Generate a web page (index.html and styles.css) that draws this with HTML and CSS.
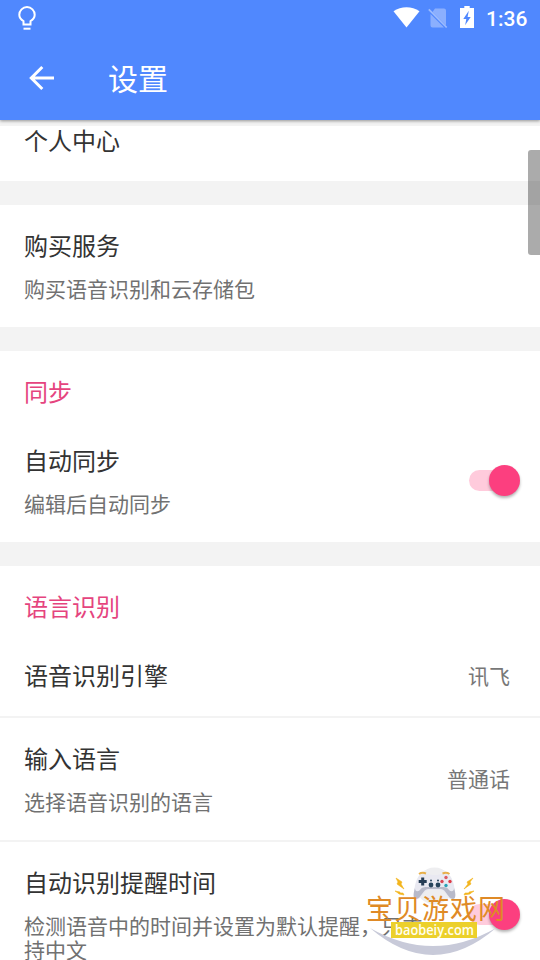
FILE: index.html
```html
<!DOCTYPE html>
<html lang="zh-CN">
<head>
<meta charset="utf-8">
<title>设置</title>
<link rel="stylesheet" href="styles.css">
</head>
<body>
<div class="screen">
  <header class="header">
    <div class="status">
      <svg class="bulb" width="18" height="26" viewBox="0 0 18 26" fill="none" stroke="#fff" stroke-width="2"><path d="M5.500 18.600v-3.400C3 13.700 1.300 11.600 1.300 8.800a7.700 7.700 0 0 1 15.400 0c0 2.800-1.700 4.900-4.200 6.400v3.400z"/><path d="M5.500 22.700h7"/></svg>
      <span class="spacer"></span>
      <svg class="wifi" width="27" height="21" viewBox="0 0 27 21"><path d="M.5 4.200C8-1.200 19-1.200 26.500 4.200L13.500 20.600z" fill="#fff"/></svg>
      <svg class="sim" width="20" height="22" viewBox="0 0 20 22"><path d="M7 1.500h9a2 2 0 0 1 2 2v15L4.500 5zM2.500 7L16 20.500H4.500a2 2 0 0 1-2-2z" fill="#8baffe"/><path d="M.8 2.300L18.700 20.500" stroke="#9dbcfe" stroke-width="1.700"/></svg>
      <svg class="battery" width="14" height="22" viewBox="0 0 14 22"><path d="M4.300 0h5.400v2H14v20H0V2h4.300z" fill="#fff"/><path d="M8.800 4.800L3.300 13h3l-1.200 6.200L10.700 11H7.600z" fill="#5088fe"/></svg>
      <span class="clock">1:36</span>
    </div>
    <div class="toolbar">
      <svg class="back" width="26" height="26" viewBox="0 0 26 26" fill="none" stroke="#fff" stroke-width="3"><path d="M25 13H3M13.300 2L2.300 13l11 11"/></svg>
      <h1>设置</h1>
    </div>
  </header>
  <main>
    <section class="profile"><div class="title">个人中心</div></section>
    <section>
      <div class="row"><div><div class="title">购买服务</div><div class="sub">购买语音识别和云存储包</div></div></div>
    </section>
    <section>
      <h2>同步</h2>
      <div class="row with-switch"><div><div class="title">自动同步</div><div class="sub">编辑后自动同步</div></div><span class="switch"></span></div>
    </section>
    <section>
      <h2>语言识别</h2>
      <div class="row compact"><div class="title">语音识别引擎</div><span class="value">讯飞</span></div>
      <div class="row divided"><div><div class="title">输入语言</div><div class="sub">选择语音识别的语言</div></div><span class="value">普通话</span></div>
      <div class="row divided with-switch last"><div><div class="title">自动识别提醒时间</div><div class="sub">检测语音中的时间并设置为默认提醒，只支<br>持中文</div></div><span class="switch"></span></div>
    </section>
  </main>
  <div class="scrollbar"></div>
  <svg class="watermark" width="150" height="94" viewBox="0 0 150 94">
    <circle cx="73.500" cy="21" r="18.500" fill="#eeeef0"/>
    <path d="M9 63Q72 117 135 63Q72 99 9 63z" fill="#c8cad9"/>
    <path d="M59 10c6-3 10 0 14.500 0S83 7 88 10c4 3 6 13 6 19 0 5-3 7-6 4-4-5-5-8-9-8H68c-4 0-5 4-9 8-4 3-6 0-6-4 0-6 2-16 6-19z" fill="#e9e9f1"/>
    <path d="M54 23c-2 6-2 11 1 11 5 0 7-10 12-10h13c5 0 7 10 12 10 3 0 3-5 1-11 0 4-3 4-5 2-2-3-4-3-8-3H67c-4 0-6 0-8 3-2 2-5 2-5-2z" fill="#b8bac9"/>
    <path d="M58 9q3-2 7-.5M81.500 8.500q4-1.500 7 .5" stroke="#e7b04b" stroke-width="2" fill="none"/>
    <path d="M57.700 16.500h8M61.700 12.500v8" stroke="#263d55" stroke-width="3"/>
    <g fill="#27445c"><circle cx="70" cy="15.500" r="1"/><circle cx="77" cy="15.500" r="1"/><circle cx="70" cy="20" r="2.400"/><circle cx="77" cy="20" r="2.400"/></g>
    <circle cx="85" cy="12.500" r="1.700" fill="#dc5b62"/><circle cx="81" cy="16.500" r="1.700" fill="#d84755"/><circle cx="89" cy="16.500" r="1.700" fill="#de3a45"/><circle cx="85" cy="20.500" r="1.700" fill="#2aa1b6"/>
    <g fill="#f3b51e" stroke="#f3b51e" stroke-width=".6"><path d="M35 13l6 4-1 2 3 5-7-5 1-2zM34 26l5 1v1l3 0 1 2-5-1-1-1zM112 13l-6 4 1 2-4 5 7-5-1-2zM113 26l-5 1v1l-4 0-1 2 6-1 1-1z"/></g>
    <text class="brand" x="5" y="53.500">宝贝游戏网</text>
    <rect x="30" y="57" width="86" height="16" fill="#ecd02b"/>
    <text class="domain" x="34" y="69.500" textLength="79" lengthAdjust="spacingAndGlyphs">baobeiy.com</text>
  </svg>
</div>
</body>
</html>
```
FILE: styles.css
```css
* { box-sizing: border-box; }
body { margin: 0; background: #fff; font-family: Roboto, "Noto Sans CJK SC", sans-serif; }
.screen { position: relative; width: 540px; height: 960px; overflow: hidden; display: flex; flex-direction: column; }
.header { position: relative; flex: none; height: 120px; background: #5088fe; color: #fff; box-shadow: 0 1px 3px rgba(0,0,0,.4); }
.status { height: 36px; display: flex; align-items: center; padding: 0 12px 0 18px; }
.bulb { margin-top: 1px; }
.spacer { flex: 1; }
.wifi { margin-right: 8px; margin-top: -1px; }
.sim { margin-right: 12px; }
.battery { margin-right: 12px; margin-top: -2px; }
.clock { font-size: 21px; line-height: 24px; font-weight: 500; width: 42px; margin-top: 2px; white-space: nowrap; }
.toolbar { height: 84px; display: flex; align-items: center; padding-left: 29px; }
.back { margin-right: 53px; }
h1 { margin: 0 0 3px; font: 400 30px/36px "Noto Sans CJK SC", sans-serif; }
main { flex: 1; min-height: 0; overflow: hidden; font-family: "Noto Sans CJK SC", sans-serif; }
section { border-bottom: 24px solid #f3f3f3; }
.profile { height: 85px; padding: 0 24px; border-top: 6px solid #f3f3f3; }
.row { display: flex; justify-content: space-between; align-items: center; padding: 26px 30px 26px 24px; height: 122px; }
.title { font-size: 24px; line-height: 28px; color: #333; white-space: nowrap; }
.sub { margin-top: 17px; margin-bottom: 1px; font-size: 21px; line-height: 24px; color: #717171; white-space: nowrap; }
h2 { margin: 0; padding: 26px 24px 0; height: 69px; font-size: 24px; line-height: 28px; font-weight: 400; color: #e5447e; }
.compact { height: 81px; padding-bottom: 27px; }
.divided { height: 124px; border-top: 2px solid #f3f3f3; }
.last { height: 148px; }
.value { font-size: 21px; line-height: 24px; color: #777; }
.divided .value { margin-bottom: 2px; }
.with-switch { padding-right: 20px; }
.switch { flex: none; position: relative; width: 45px; height: 21px; border-radius: 11px; background: #ffcbdc; margin: 0 6px 1px 0; }
.switch::after { content: ""; position: absolute; right: -6px; top: -5px; width: 31px; height: 31px; border-radius: 50%; background: #fc3f7f; box-shadow: 0 2px 3px rgba(0,0,0,.3); }
.scrollbar { position: absolute; right: 0; top: 150px; width: 12px; height: 105px; border-radius: 3px 0 0 3px; background: rgba(0,0,0,.33); }
.watermark { position: absolute; left: 361px; top: 865px; }
.brand { font: 400 27px "Noto Sans CJK SC", sans-serif; letter-spacing: 1px; fill: #df8a26; }
.domain { font: 600 14.5px "Open Sans", sans-serif; fill: #fffef0; }
```
